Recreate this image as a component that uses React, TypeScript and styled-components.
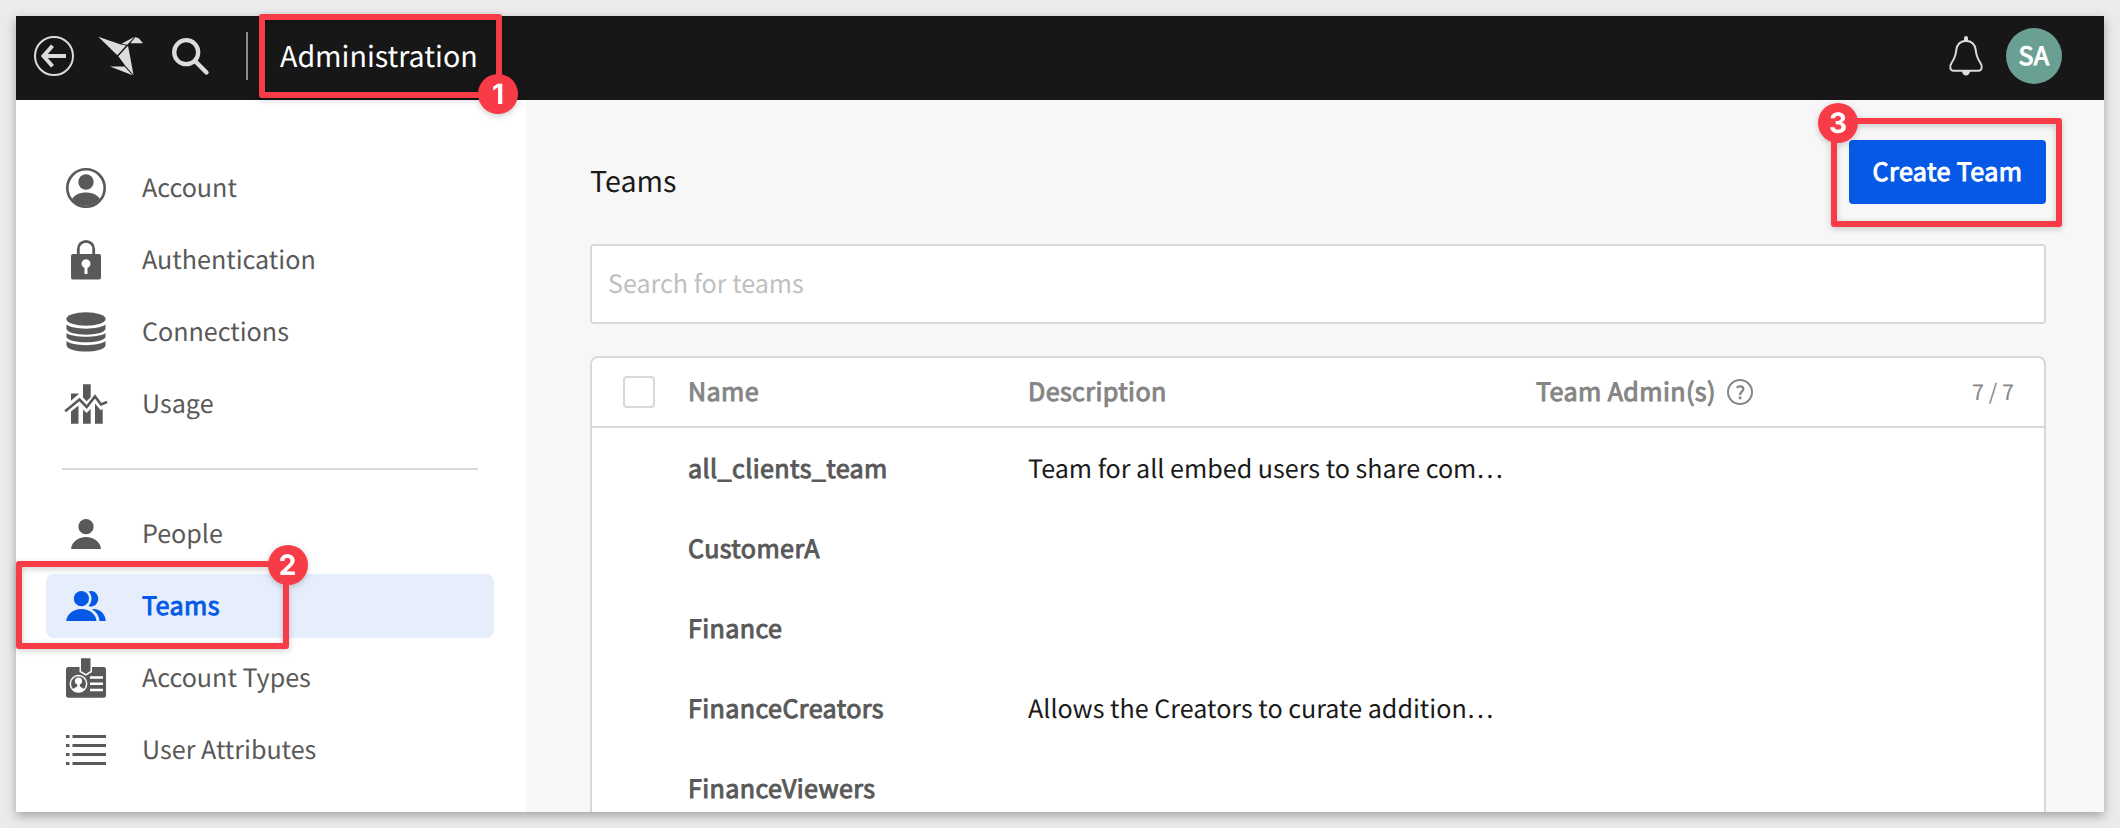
import React from "react";
import styled, { createGlobalStyle, css } from "styled-components";

const GlobalStyle = createGlobalStyle`
  *, *::before, *::after { box-sizing: border-box; }
  html, body { margin: 0; padding: 0; height: 100%; }
  body {
    background: #ebebeb;
    font-family: "Noto Sans CJK JP", "Noto Sans CJK SC", "Noto Sans", sans-serif;
    font-size: 25.1px;
    color: #1a1a1a;
    text-rendering: geometricPrecision;
    overflow: hidden;
  }
  svg { display: block; flex: none; overflow: visible; }
`;

/* A weight between regular and bold: the regular face, thickened. */
const semibold = css`
  font-weight: 400;
  letter-spacing: 0.4px;
  -webkit-text-stroke: 1px currentColor;
`;

const Stage = styled.div`
  position: relative;
  width: 2120px;
  height: 828px;
  padding: 16px;
  overflow: hidden;
`;

const AppWindow = styled.div`
  display: flex;
  flex-direction: column;
  height: 796px;
  background: #f7f7f7;
  box-shadow: 0 4px 10px rgba(0, 0, 0, 0.3);
`;

const TopBar = styled.header`
  display: flex;
  align-items: center;
  flex: none;
  height: 84px;
  padding: 0 42px 4px 18px;
  background: #171717;
  color: #dcdcdc;
`;

const BarIcons = styled.div`
  display: flex;
  align-items: center;
  gap: 24px;
`;

const BarDivider = styled.div`
  width: 2px;
  height: 48px;
  margin: 0 32px 0 37px;
  background: #8c8c8c;
`;

const BarTitle = styled.div`
  flex: 1;
  padding-bottom: 1px;
  color: #fff;
  font-size: 28.6px;
  line-height: 40px;
`;

const Avatar = styled.div`
  display: flex;
  align-items: center;
  justify-content: center;
  width: 56px;
  height: 56px;
  margin-left: 23px;
  padding-bottom: 2px;
  border-radius: 50%;
  background: #6a9f94;
  color: #fff;
  line-height: 36px;
  ${semibold}
`;

const Body = styled.div`
  display: flex;
  flex: 1;
  min-height: 0;
`;

const Sidebar = styled.nav`
  flex: none;
  width: 510px;
  padding: 56px 32px 0 30px;
  background: #fff;
`;

const NavItem = styled.div<{ $active?: boolean }>`
  display: flex;
  align-items: center;
  gap: 36px;
  height: 64px;
  margin-bottom: 8px;
  padding-left: 20px;
  border-radius: 8px;
  background: ${(p) => (p.$active ? "#e6eefc" : "transparent")};
  color: ${(p) => (p.$active ? "#0559e6" : "#595959")};
  ${(p) => p.$active && semibold}
`;

const NavLabel = styled.span`
  padding-bottom: 2px;
`;

const NavRule = styled.hr`
  height: 2px;
  margin: 32px 16px;
  border: 0;
  background: #d9d9d9;
`;

const Content = styled.main`
  display: flex;
  flex-direction: column;
  flex: 1;
  min-width: 0;
  padding: 40px 58px 0 64px;
`;

const Heading = styled.div`
  display: flex;
  justify-content: space-between;
  height: 64px;
  margin-bottom: 40px;
`;

const Title = styled.h1`
  margin: 0;
  padding-top: 21px;
  font-size: 28.6px;
  font-weight: 400;
  line-height: 40px;
`;

const CreateButton = styled.button`
  width: 197px;
  height: 64px;
  padding: 0 0 2px;
  border: 0;
  border-radius: 4px;
  background: #0559e6;
  color: #fff;
  font: inherit;
  text-rendering: inherit;
  white-space: nowrap;
  ${semibold}
`;

const SearchBox = styled.input`
  flex: none;
  width: 100%;
  height: 80px;
  margin-bottom: 32px;
  padding: 0 16px 2px;
  border: 2px solid #d9d9d9;
  border-radius: 4px;
  background: #fff;
  font: inherit;
  text-rendering: inherit;
  &::placeholder { color: #bfbfbf; opacity: 1; }
`;

const Table = styled.section`
  flex: 1;
  min-height: 0;
  overflow: hidden;
  border: 2px solid #d9d9d9;
  border-bottom: 0;
  border-radius: 8px 8px 0 0;
  background: #fff;
`;

const Row = styled.div`
  display: grid;
  grid-template-columns: 65px 340px 508px 1fr auto;
  align-items: center;
  height: 80px;
  padding: 0 30px 0 31px;
  white-space: nowrap;
`;

const HeadRow = styled(Row)`
  height: 72px;
  border-bottom: 2px solid #d9d9d9;
  color: #858585;
  height: 70px;
`;

const HeadLabel = styled.div`
  padding-bottom: 2px;
  ${semibold}
`;

const Checkbox = styled.div`
  width: 32px;
  height: 32px;
  border: 2px solid #d9d9d9;
  border-radius: 4px;
`;

const AdminHead = styled.div`
  display: flex;
  align-items: center;
  gap: 11px;
`;

const Count = styled.div`
  padding-bottom: 2px;
  font-size: 21.6px;
`;

const TeamName = styled.div`
  grid-column: 2;
  color: #595959;
  ${semibold}
`;

const Callout = styled.div<{ $x: number; $y: number; $w: number; $h: number }>`
  position: absolute;
  left: ${(p) => p.$x}px;
  top: ${(p) => p.$y}px;
  width: ${(p) => p.$w}px;
  height: ${(p) => p.$h}px;
  border: 6px solid #f73c48;
  border-radius: 3px;
  filter: drop-shadow(0 2px 3px rgba(0, 0, 0, 0.2));
`;

const CalloutNumber = styled.div<{ $x: number; $y: number }>`
  position: absolute;
  left: ${(p) => p.$x - 6}px;
  top: ${(p) => p.$y - 6}px;
  width: 40px;
  height: 40px;
  border-radius: 50%;
  background: #f73c48;
  color: #fff;
  font-family: Inter, sans-serif;
  font-size: 28px;
  font-weight: 700;
  line-height: 40px;
  text-align: center;
`;

const BackIcon = () => (
  <svg width="40" height="40" viewBox="0 0 40 40" fill="none" stroke="#dcdcdc">
    <circle cx="20" cy="20" r="19" strokeWidth="2" />
    <path d="M32 20H10M18.500 9.800 9.500 20l9 10.200" strokeWidth="4" />
  </svg>
);

const BirdIcon = () => (
  <svg width="46" height="40" viewBox="0 0 46 40" fill="#dcdcdc">
    <path d="M.3.800 22 8.300 28.200 9.600 19.300 19.200ZM23.500 7.800 36.500.800 29.300 8.800ZM37.500 1 41 2.500 45 7.300H32.300ZM30 9.800 32.300 21.500 35.500 39 27.500 30 20.300 20.200ZM12 30.500H26.500L34.500 39.200Z" />
  </svg>
);

const SearchIcon = () => (
  <svg width="37" height="37" viewBox="0 0 37 37" fill="none" stroke="#dcdcdc">
    <circle cx="14.200" cy="14.200" r="12" strokeWidth="4.300" />
    <path d="m23 23 11.500 11.500" strokeWidth="4.400" strokeLinecap="round" />
  </svg>
);

const SearchSlot = styled.div`
  margin-left: 4px;
`;

const BellIcon = () => (
  <svg width="34" height="40" viewBox="0 0 34 40">
    <path
      d="M17 5c6 0 9 4 9.700 9 .7 6 2.300 9.500 4.800 13 2.200 3.300 1.500 7.800-2 7.800h-25c-3.500 0-4.200-4.500-2-7.800 2.500-3.500 4.100-7 4.800-13C8 9 11 5 17 5Z"
      fill="none"
      stroke="#dcdcdc"
      strokeWidth="2"
    />
    <path d="M15 5V2a2 2 0 0 1 4 0v3ZM13 35h8a4 4.500 0 0 1-8 0Z" fill="#dcdcdc" />
  </svg>
);

const AccountIcon = () => (
  <svg width="40" height="40" viewBox="0 0 40 40" fill="currentColor">
    <circle cx="20" cy="20" r="18.700" fill="none" stroke="currentColor" strokeWidth="2.600" />
    <circle cx="20" cy="14" r="7.700" />
    <path d="M6 31c3-4.500 8-6.500 14-6.500S31 26.500 34 31a18 18 0 0 1-28 0Z" />
  </svg>
);

const LockIcon = () => (
  <svg width="40" height="40" viewBox="0 0 40 40" fill="currentColor">
    <path d="M12.300 15V9a7.700 7.700 0 0 1 15.400 0v6" fill="none" stroke="currentColor" strokeWidth="2.800" />
    <path
      fillRule="evenodd"
      d="M7 14h26a2 2 0 0 1 2 2v21.500a2 2 0 0 1-2 2H7a2 2 0 0 1-2-2V16a2 2 0 0 1 2-2Zm11.500 14v6h3v-6a4.500 4.500 0 1 0-3 0Z"
    />
  </svg>
);

const DatabaseIcon = () => (
  <svg width="40" height="40" viewBox="0 0 40 40" fill="currentColor">
    <ellipse cx="20" cy="7" rx="19.700" ry="6.700" />
    <path d="M.5 12.500c6 5.500 33 5.500 39 0V17c-2 7.500-37 7.500-39 0ZM.5 21c6 5 33 5 39 0v4c-2 7-37 7-39 0ZM.5 29c6 5.500 33 5.500 39 0v4.500c-2 8-37 8-39 0Z" />
  </svg>
);

const UsageIcon = () => (
  <svg width="40" height="40" viewBox="0 0 40 40" fill="currentColor">
    <path d="M5 9.500h7.500v.8L5 16.800ZM17 .3h7.700v13l-4 4-3.700-3.800ZM5 27.500l7.500-6v18.200H5ZM17 25.500l3.500 3.500 4.200-4v14.700H17ZM29 19.500l5.500 6.500 2.200-.7v14.400H29Z" />
    <path d="M-.8 27.200 13.500 15.500l7.200 7.500L29 12.500l6 8 6-2.500" fill="none" stroke="currentColor" strokeWidth="2.600" />
  </svg>
);

const PersonIcon = () => (
  <svg width="40" height="40" viewBox="0 0 40 40" fill="currentColor">
    <circle cx="20" cy="12.700" r="7.600" />
    <path d="M5 35c.5-7 7-12 15-12s14.500 5 15 12Z" />
  </svg>
);

const TeamsIcon = () => (
  <svg width="40" height="40" viewBox="0 0 40 40" fill="currentColor">
    <circle cx="15.400" cy="12.700" r="7.600" />
    <path d="M.3 35c.5-7 7-12 15.100-12s14.600 5 15.100 12ZM22.500 5.500c5-2 9.700 2 9.700 7.200s-4.700 9.200-9.700 7.200c4-4 4-10.400 0-14.400ZM26 23.300C33 22 39.500 28 39.700 35H33.500c-.5-5-3-9-7.500-11.700Z" />
  </svg>
);

const BadgeIcon = () => (
  <svg width="40" height="40" viewBox="0 0 40 40" fill="currentColor">
    <path d="M2.500 9H13.500v5l6.300 3.800L26 14V9h11.500A2.500 2.500 0 0 1 40 11.500v25.700a2.500 2.500 0 0 1-2.500 2.500h-35A2.500 2.500 0 0 1 0 37.200V11.500A2.500 2.500 0 0 1 2.500 9Z" />
    <path d="M15 .3h9.500v12.700l-4.700 3-4.800-3Z" stroke="#fff" strokeWidth="1.300" paintOrder="stroke" />
    <circle cx="12.500" cy="25.800" r="8.200" fill="none" stroke="#fff" strokeWidth="1.500" />
    <circle cx="12.500" cy="23" r="3.600" fill="#fff" />
    <path d="M7 31.500c1-2 3-2 4.200-3V25h2.600v3.500c1.200 1 3.200 1 4.200 3a7 7 0 0 1-11 0Z" fill="#fff" />
    <path d="M24 19.500h13M24 25.800h13M24 32h13" stroke="#fff" strokeWidth="2.600" />
  </svg>
);

const ListIcon = () => (
  <svg width="40" height="40" viewBox="0 0 40 40" stroke="currentColor" strokeWidth="3">
    <path d="M0 6.500h3.500M6.500 6.500H40M0 15.500h3.500M6.500 15.500H40M0 24.500h3.500M6.500 24.500H40M0 33.500h3.500M6.500 33.500H40" />
  </svg>
);

const HelpIcon = () => (
  <svg width="26" height="26" viewBox="0 0 26 26" fill="none" stroke="currentColor" strokeWidth="2">
    <circle cx="13" cy="13" r="12" />
    <path d="M9.700 8.800c2-2.300 6.800-1.700 6.600 1.500-.2 2.500-3.200 2.500-3.200 5.700" strokeWidth="2.300" />
    <path d="M13.100 17.600v2.600" strokeWidth="2.600" />
  </svg>
);

const topItems = [
  { label: "Account", Icon: AccountIcon },
  { label: "Authentication", Icon: LockIcon },
  { label: "Connections", Icon: DatabaseIcon },
  { label: "Usage", Icon: UsageIcon },
];

const bottomItems = [
  { label: "People", Icon: PersonIcon },
  { label: "Teams", Icon: TeamsIcon, active: true },
  { label: "Account Types", Icon: BadgeIcon },
  { label: "User Attributes", Icon: ListIcon },
];

const teams = [
  { name: "all_clients_team", description: "Team for all embed users to share com…" },
  { name: "CustomerA", description: "" },
  { name: "Finance", description: "" },
  { name: "FinanceCreators", description: "Allows the Creators to curate addition…" },
  { name: "FinanceViewers", description: "" },
];

export default function App() {
  return (
    <Stage>
      <GlobalStyle />
      <AppWindow>
        <TopBar>
          <BarIcons>
            <BackIcon />
            <BirdIcon />
            <SearchSlot>
              <SearchIcon />
            </SearchSlot>
          </BarIcons>
          <BarDivider />
          <BarTitle>Administration</BarTitle>
          <BellIcon />
          <Avatar>SA</Avatar>
        </TopBar>
        <Body>
          <Sidebar>
            {topItems.map(({ label, Icon }) => (
              <NavItem key={label}>
                <Icon />
                <NavLabel>{label}</NavLabel>
              </NavItem>
            ))}
            <NavRule />
            {bottomItems.map(({ label, Icon, active }) => (
              <NavItem key={label} $active={active}>
                <Icon />
                <NavLabel>{label}</NavLabel>
              </NavItem>
            ))}
          </Sidebar>
          <Content>
            <Heading>
              <Title>Teams</Title>
              <CreateButton>Create Team</CreateButton>
            </Heading>
            <SearchBox placeholder="Search for teams" />
            <Table>
              <HeadRow>
                <Checkbox />
                <HeadLabel>Name</HeadLabel>
                <HeadLabel>Description</HeadLabel>
                <AdminHead>
                  <HeadLabel>Team Admin(s)</HeadLabel>
                  <HelpIcon />
                </AdminHead>
                <Count>7 / 7</Count>
              </HeadRow>
              {teams.map((team) => (
                <Row key={team.name}>
                  <TeamName>{team.name}</TeamName>
                  <div>{team.description}</div>
                </Row>
              ))}
            </Table>
          </Content>
        </Body>
      </AppWindow>
      <Callout $x={259} $y={14} $w={243} $h={84}>
        <CalloutNumber $x={219} $y={60}>1</CalloutNumber>
      </Callout>
      <Callout $x={16} $y={561} $w={273} $h={88}>
        <CalloutNumber $x={251.500} $y={-16}>2</CalloutNumber>
      </Callout>
      <Callout $x={1831} $y={118} $w={231} $h={109}>
        <CalloutNumber $x={-13} $y={-15}>3</CalloutNumber>
      </Callout>
    </Stage>
  );
}
